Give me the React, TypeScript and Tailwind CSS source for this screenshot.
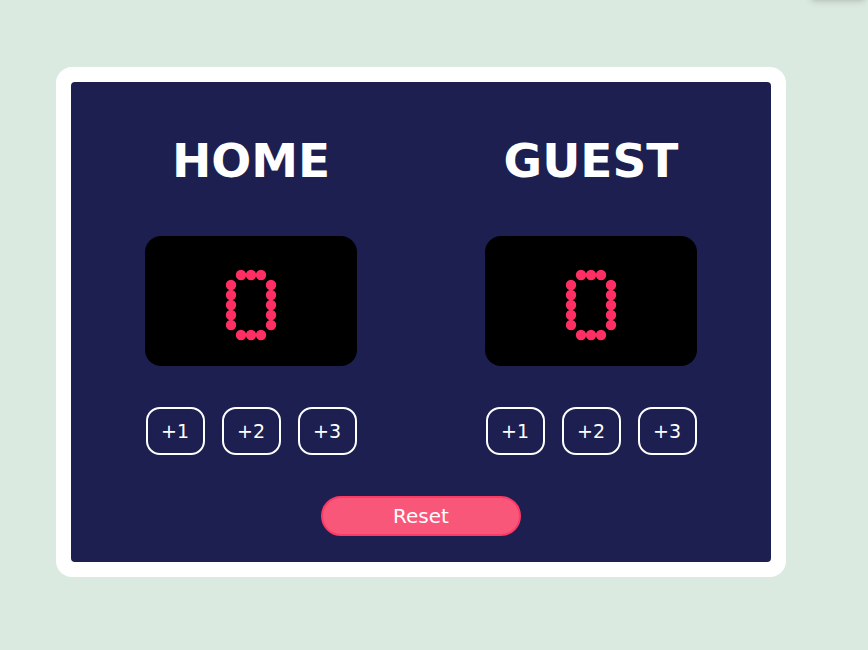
import React, { useState } from 'react';

// 5x7 dot-matrix glyphs for the LED score display
const GLYPHS: Record<string, string[]> = {
  '0': ['.XXX.', 'X...X', 'X...X', 'X...X', 'X...X', 'X...X', '.XXX.'],
  '1': ['..X..', '.XX..', '..X..', '..X..', '..X..', '..X..', '.XXX.'],
  '2': ['.XXX.', 'X...X', '....X', '...X.', '..X..', '.X...', 'XXXXX'],
  '3': ['XXXX.', '....X', '....X', '.XXX.', '....X', '....X', 'XXXX.'],
  '4': ['...X.', '..XX.', '.X.X.', 'X..X.', 'XXXXX', '...X.', '...X.'],
  '5': ['XXXXX', 'X....', 'XXXX.', '....X', '....X', 'X...X', '.XXX.'],
  '6': ['.XXX.', 'X....', 'X....', 'XXXX.', 'X...X', 'X...X', '.XXX.'],
  '7': ['XXXXX', '....X', '...X.', '..X..', '..X..', '..X..', '..X..'],
  '8': ['.XXX.', 'X...X', 'X...X', '.XXX.', 'X...X', 'X...X', '.XXX.'],
  '9': ['.XXX.', 'X...X', 'X...X', '.XXXX', '....X', '....X', '.XXX.'],
};

const LedScore = ({ value }: { value: number }) => {
  const digits = String(value).split('');
  const cell = 10;
  const glyphW = 5 * cell + 10;
  const totalW = digits.length * glyphW - 10;
  const startX = 106 - totalW / 2 + 5;
  return (
    <div className="w-[212px] h-[130px] rounded-2xl bg-black">
      <svg width="212" height="130" viewBox="0 0 212 130" role="img" aria-label={String(value)}>
        {digits.map((d, di) =>
          GLYPHS[d].map((row, r) =>
            row.split('').map((c, ci) =>
              c === 'X' ? (
                <circle
                  key={`${di}-${r}-${ci}`}
                  cx={startX + di * glyphW + ci * cell}
                  cy={39 + r * cell}
                  r="5.2"
                  fill="#ff2e63"
                />
              ) : null,
            ),
          ),
        )}
      </svg>
    </div>
  );
};

const Team = ({ name, score, onAdd }: { name: string; score: number; onAdd: (n: number) => void }) => (
  <div className="flex flex-col items-center">
    <h2 className="h-12 text-[47px] leading-[48px] font-bold text-white font-['DejaVu_Sans',sans-serif]">{name}</h2>
    <div className="mt-[51px]">
      <LedScore value={score} />
    </div>
    <div className="mt-[41px] flex gap-[17px]">
      {[1, 2, 3].map(n => (
        <button
          key={n}
          onClick={() => onAdd(n)}
          className="w-[59px] h-[48px] rounded-[14px] border-2 border-white text-white text-[19px] font-['DejaVu_Sans',sans-serif]"
        >
          +{n}
        </button>
      ))}
    </div>
  </div>
);

export default function App() {
  const [home, setHome] = useState(0);
  const [guest, setGuest] = useState(0);

  return (
    <div className="relative min-h-screen overflow-hidden bg-[#dbeae0] pl-[56px] pt-[67px]">
      <div className="absolute -top-[40px] right-0 w-[60px] h-[40px] rounded-lg bg-[#dbeae0] shadow-md" />
      <div className="w-[730px] rounded-2xl bg-white p-[15px]">
        <div className="h-[480px] rounded bg-[#1d1f51] pt-[55px] flex flex-col items-center">
          <div className="flex justify-center gap-32">
            <Team name="HOME" score={home} onAdd={n => setHome(home + n)} />
            <Team name="GUEST" score={guest} onAdd={n => setGuest(guest + n)} />
          </div>
          <button
            onClick={() => {
              setHome(0);
              setGuest(0);
            }}
            className="mt-[41px] w-[200px] h-[40px] rounded-full bg-[#f9577a] border-2 border-[#fc3a66] text-white text-[20px] font-['DejaVu_Sans',sans-serif]"
          >
            Reset
          </button>
        </div>
      </div>
    </div>
  );
}
